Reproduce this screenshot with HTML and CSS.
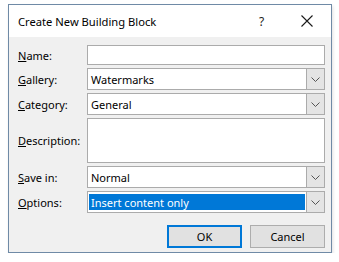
FILE: index.html
```html
<!DOCTYPE html>
<html>
<head>
<meta charset="utf-8">
<link rel="stylesheet" href="styles.css">
</head>
<body>
<div class="dialog">
  <div class="titlebar">
    <span class="title">Create New Building Block</span>
    <span class="help">?</span>
    <span class="close"><svg width="12" height="12" viewBox="0 0 12 12"><path d="M0.5 0.5 L11.5 11.5 M11.5 0.5 L0.5 11.5" stroke="#1a1a1a" stroke-width="1.1" fill="none"/></svg></span>
  </div>
  <div class="content">
    <div class="form">
      <label class="lbl"><u>N</u>ame:</label>
      <div class="field text"></div>

      <label class="lbl"><u>G</u>allery:</label>
      <div class="field combo"><span class="val">Watermarks</span><span class="arrow"><svg width="9" height="5" viewBox="0 0 9 5"><path d="M0.5 0.5 L4.5 4.5 L8.5 0.5" stroke="#555" fill="none"/></svg></span></div>

      <label class="lbl"><u>C</u>ategory:</label>
      <div class="field combo"><span class="val">General</span><span class="arrow"><svg width="9" height="5" viewBox="0 0 9 5"><path d="M0.5 0.5 L4.5 4.5 L8.5 0.5" stroke="#555" fill="none"/></svg></span></div>

      <label class="lbl"><u>D</u>escription:</label>
      <div class="field area"></div>

      <label class="lbl"><u>S</u>ave in:</label>
      <div class="field combo"><span class="val">Normal</span><span class="arrow"><svg width="9" height="5" viewBox="0 0 9 5"><path d="M0.5 0.5 L4.5 4.5 L8.5 0.5" stroke="#555" fill="none"/></svg></span></div>

      <label class="lbl"><u>O</u>ptions:</label>
      <div class="field combo"><span class="val sel">Insert content only</span><span class="arrow"><svg width="9" height="5" viewBox="0 0 9 5"><path d="M0.5 0.5 L4.5 4.5 L8.5 0.5" stroke="#555" fill="none"/></svg></span></div>
    </div>
    <div class="buttons">
      <button class="btn default">OK</button>
      <button class="btn">Cancel</button>
    </div>
  </div>
</div>
</body>
</html>
```
FILE: styles.css
```css
html, body {
  margin: 0;
  padding: 0;
  background: #ffffff;
}
body {
  font-family: "Noto Sans", "Open Sans", sans-serif;
  font-size: 11px;
  color: #000;
  padding: 4px 0 0 8px;
}
.dialog {
  width: 324px;
  height: 249px;
  box-sizing: border-box;
  border: 1px solid #6f8aa6;
  background: #f0f0f0;
  display: flex;
  flex-direction: column;
  box-shadow: 1px 2px 3px rgba(0,0,0,0.12);
}
.titlebar {
  height: 32px;
  background: #ffffff;
  display: flex;
  align-items: center;
  padding-left: 9px;
  box-sizing: border-box;
}
.title {
  flex: 1;
  font-size: 11.2px;
  color: #000;
}
.help {
  width: 16px;
  font-size: 12px;
  margin-right: 26px;
  color: #222;
}
.close {
  display: flex;
  margin-right: 18px;
}
.content {
  flex: 1;
  padding: 8px 6px 0 8px;
  display: flex;
  flex-direction: column;
}
.form {
  display: grid;
  grid-template-columns: 70px 1fr;
  grid-template-rows: 20px 22px 22px 45px 22px 22px;
  row-gap: 3px;
  align-items: center;
}
.lbl {
  padding-left: 1px;
  font-size: 11px;
}
.field {
  box-sizing: border-box;
  height: 100%;
  background: #fff;
  border: 1px solid #ababab;
}
.combo {
  display: flex;
  align-items: stretch;
}
.val {
  flex: 1;
  display: flex;
  align-items: center;
  padding-left: 3px;
}
.val.sel {
  background: #0078d7;
  color: #fff;
  margin: 2px 1px 2px 1px;
  padding-left: 2px;
}
.arrow {
  width: 17px;
  background: #e4e4e4;
  border-left: 1px solid #ababab;
  display: flex;
  align-items: center;
  justify-content: center;
}
.buttons {
  display: flex;
  justify-content: flex-end;
  gap: 8px;
  margin-top: 12px;
}
.btn {
  font-family: "Noto Sans", "Open Sans", sans-serif;
  font-size: 11px;
  height: 23px;
  width: 75px;
  box-sizing: border-box;
  background: #e1e1e1;
  border: 1px solid #adadad;
  padding: 0;
  color: #000;
}
.btn.default {
  border: 2px solid #0078d7;
}
```
